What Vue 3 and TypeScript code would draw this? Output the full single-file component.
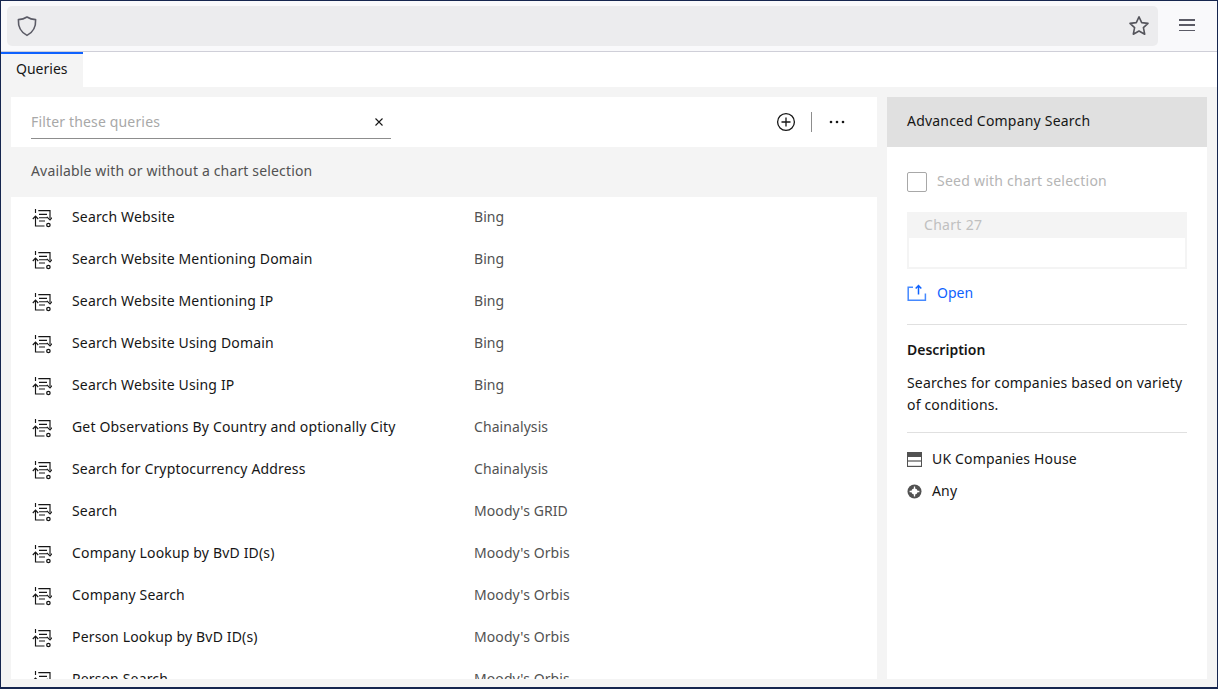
<script setup lang="ts">
interface Row { name: string; source: string }
const rows: Row[] = [
  { name: 'Search Website', source: 'Bing' },
  { name: 'Search Website Mentioning Domain', source: 'Bing' },
  { name: 'Search Website Mentioning IP', source: 'Bing' },
  { name: 'Search Website Using Domain', source: 'Bing' },
  { name: 'Search Website Using IP', source: 'Bing' },
  { name: 'Get Observations By Country and optionally City', source: 'Chainalysis' },
  { name: 'Search for Cryptocurrency Address', source: 'Chainalysis' },
  { name: 'Search', source: "Moody's GRID" },
  { name: 'Company Lookup by BvD ID(s)', source: "Moody's Orbis" },
  { name: 'Company Search', source: "Moody's Orbis" },
  { name: 'Person Lookup by BvD ID(s)', source: "Moody's Orbis" },
  { name: 'Person Search', source: "Moody's Orbis" },
]
</script>

<template>
  <div class="window">
    <div class="top-notch"></div>
    <header class="toolbar">
      <div class="urlbar">
        <svg class="shield" width="22" height="22" viewBox="0 0 22 22" fill="none" stroke="#5b5b66" stroke-width="1.6">
          <path d="M11 2 C13.5 3.6 16 4.4 19.6 4.6 C20 11.5 17.6 17 11 20.4 C4.4 17 2 11.5 2.4 4.6 C6 4.4 8.5 3.6 11 2 Z" stroke-linejoin="round" />
        </svg>
        <svg class="star" width="22" height="22" viewBox="0 0 22 22" fill="none" stroke="#55555c" stroke-width="1.6" stroke-linejoin="round">
          <path d="M11 1.8 L13.7 7.6 L20 8.4 L15.4 12.7 L16.7 19.2 L11 16 L5.3 19.2 L6.6 12.7 L2 8.4 L8.3 7.6 Z" />
        </svg>
      </div>
      <button class="menu" aria-label="Menu"><span></span><span></span><span></span></button>
    </header>

    <nav class="tabs">
      <div class="tab">Queries</div>
    </nav>

    <main class="content">
      <section class="list-panel">
        <div class="filter-bar">
          <div class="filter">
            <span class="placeholder">Filter these queries</span>
            <svg width="10" height="10" viewBox="0 0 10 10" stroke="#161616" stroke-width="1.1"><path d="M1.5 1.5 L8.5 8.5 M8.5 1.5 L1.5 8.5" /></svg>
          </div>
          <div class="actions">
            <svg width="20" height="20" viewBox="0 0 20 20" fill="none" stroke="#161616" stroke-width="1.3">
              <circle cx="10" cy="10" r="8.4" />
              <path d="M10 5.5 V14.5 M5.5 10 H14.5" />
            </svg>
            <span class="divider"></span>
            <svg width="16" height="4" viewBox="0 0 16 4" fill="#161616">
              <circle cx="2" cy="2" r="1.3" /><circle cx="8" cy="2" r="1.3" /><circle cx="14" cy="2" r="1.3" />
            </svg>
          </div>
        </div>
        <div class="group">Available with or without a chart selection</div>
        <div class="rows">
          <div v-for="row in rows" :key="row.name" class="row">
            <svg class="row-icon" width="20" height="20" viewBox="0 0 20 20" fill="none" stroke="#161616" stroke-width="1.15">
              <path d="M3.5 1 V5" />
              <path d="M0.8 11 L3.5 8 L6.2 11 M3.5 8.5 V18 H12.5" />
              <path d="M6.3 2.6 H18 V10.5" />
              <path d="M7 6.3 H15 M7 9.7 H15 M7 13 H13" />
              <path d="M14.8 8.8 L18 12 L19.9 9.6" />
              <circle cx="16.4" cy="17" r="1.7" stroke-width="1.3" />
            </svg>
            <span class="row-name">{{ row.name }}</span>
            <span class="row-source">{{ row.source }}</span>
          </div>
        </div>
      </section>

      <aside class="detail">
        <h2 class="detail-title">Advanced Company Search</h2>
        <div class="detail-body">
          <label class="seed"><span class="box"></span><span class="raised">Seed with chart selection</span></label>
          <div class="chart">
            <div class="chart-head">Chart 27</div>
            <div class="chart-body"></div>
          </div>
          <a class="open">
            <svg width="20" height="18" viewBox="0 0 20 18" fill="none" stroke="#4589ff" stroke-width="1.5">
              <path d="M6 3.2 H1.2 V16.2 H18.4 V9.5" />
              <path d="M11.5 10.5 V2 M8.7 4.5 L11.5 1.5 L14.3 4.5" stroke="#0f62fe" />
            </svg>
            <span class="raised">Open</span>
          </a>
          <div class="section">
            <h3>Description</h3>
            <p>Searches for companies based on variety of conditions.</p>
          </div>
          <div class="meta">
            <div class="meta-row">
              <svg width="15" height="15" viewBox="0 0 15 15">
                <rect width="15" height="15" fill="#525252" />
                <rect x="1" y="5" width="13" height="3.4" fill="#fff" />
                <rect x="1" y="9.6" width="13" height="4.2" fill="#fff" />
              </svg>
              <span class="raised">UK Companies House</span>
            </div>
            <div class="meta-row">
              <svg width="15" height="15" viewBox="0 0 15 15">
                <circle cx="7.5" cy="7.5" r="7" fill="#525252" />
                <circle cx="7.5" cy="7.5" r="3" fill="#fff" />
                <path d="M7.5 2.6 V12.4 M2.6 7.5 H12.4" stroke="#fff" stroke-width="1.3" />
              </svg>
              <span class="raised">Any</span>
            </div>
          </div>
        </div>
      </aside>
    </main>
  </div>
</template>

<style>
html, body { margin: 0; height: 100%; overflow: hidden; }
</style>

<style scoped>
.window {
  position: relative;
  box-sizing: border-box;
  width: 1218px;
  height: 689px;
  display: flex;
  flex-direction: column;
  border: 1px solid #16264f;
  border-bottom-width: 2px;
  background: #f4f4f4;
  font-family: "Noto Sans", "Liberation Sans", sans-serif;
  font-size: 14px;
  letter-spacing: 0.16px;
  color: #161616;
  overflow: hidden;
}
.top-notch {
  position: absolute;
  top: -1px;
  left: 284px;
  width: 6px;
  height: 1px;
  background: #fff;
}
.raised { padding-bottom: 2px; }
.toolbar {
  flex: none;
  box-sizing: border-box;
  height: 51px;
  display: flex;
  align-items: flex-start;
  padding: 5px 0 0 6px;
  background: #f9f9fb;
  border-bottom: 1px solid #cfcfd8;
}
.urlbar {
  width: 1151px;
  height: 40px;
  box-sizing: border-box;
  display: flex;
  align-items: center;
  justify-content: space-between;
  padding: 0 8px 0 9px;
  border-radius: 5px;
  background: #ececee;
}
.menu {
  margin: 13px 0 0 21px;
  width: 16px;
  height: 12px;
  padding: 0;
  border: 0;
  background: none;
  display: flex;
  flex-direction: column;
  justify-content: space-between;
}
.menu span { display: block; height: 1.5px; background: #5b5b66; }
.tabs {
  flex: none;
  height: 35px;
  background: #fff;
  display: flex;
}
.tab {
  width: 82px;
  box-sizing: border-box;
  border-top: 2px solid #0f62fe;
  background: #f4f4f4;
  padding: 5px 0 0 15px;
  line-height: 20px;
  letter-spacing: 0;
  color: #161616;
}
.content {
  flex: 1;
  min-height: 0;
  display: flex;
  gap: 10px;
  padding: 10px 10px 8px;
}
.list-panel {
  width: 866px;
  background: #fff;
  display: flex;
  flex-direction: column;
  overflow: hidden;
}
.filter-bar {
  flex: none;
  height: 50px;
  box-sizing: border-box;
  display: flex;
  align-items: flex-start;
  justify-content: space-between;
  padding: 0 32px 0 20px;
}
.filter {
  width: 360px;
  height: 42px;
  box-sizing: border-box;
  border-bottom: 1px solid #8d8d8d;
  display: flex;
  align-items: center;
  justify-content: space-between;
  padding: 8px 7px 0 0;
}
.placeholder { color: #a8a8a8; }
.actions {
  display: flex;
  align-items: center;
  gap: 15px;
  height: 50px;
}
.divider { width: 1px; height: 20px; background: #8d8d8d; margin-right: 2px; }
.group {
  flex: none;
  height: 50px;
  line-height: 48px;
  padding-left: 20px;
  background: #f4f4f4;
  color: #525252;
}
.rows { flex: 1; min-height: 0; overflow: hidden; }
.row {
  height: 42px;
  display: flex;
  align-items: center;
  padding-left: 21px;
}
.row-icon { flex: none; }
.row-name { width: 402px; margin-left: 20px; flex: none; padding-bottom: 4px; }
.row-source { color: #525252; padding-bottom: 4px; letter-spacing: 0.08px; }
.detail {
  flex: 1;
  background: #fff;
}
.detail-title {
  margin: 0;
  height: 50px;
  line-height: 48px;
  padding-left: 20px;
  background: #e0e0e0;
  font-size: 14px;
  font-weight: 400;
  letter-spacing: 0.2px;
}
.detail-body { padding: 24px 20px 0; }
.seed {
  display: flex;
  align-items: center;
  gap: 10px;
  color: #b5b5b5;
  letter-spacing: 0.24px;
}
.box {
  width: 18px;
  height: 18px;
  border: 1px solid #a8a8a8;
  border-radius: 2px;
}
.chart {
  margin-top: 20px;
  border: 2px solid #f4f4f4;
  border-top: 0;
}
.chart-head {
  height: 26px;
  line-height: 26px;
  padding-left: 15px;
  background: #f4f4f4;
  color: #c0c0c0;
  letter-spacing: 0.3px;
}
.chart-body { height: 29px; background: #fff; }
.open {
  display: flex;
  align-items: center;
  gap: 10px;
  margin-top: 15px;
  color: #0f62fe;
  height: 18px;
  letter-spacing: 0;
}
.section {
  margin-top: 22px;
  padding: 15px 0 16px;
  border-top: 1px solid #e0e0e0;
  border-bottom: 1px solid #e0e0e0;
}
.section h3 { margin: 0; font-size: 14px; font-weight: 600; line-height: 20px; letter-spacing: 0; }
.section p { margin: 12px 0 0; line-height: 22px; }
.meta { padding-top: 16px; }
.meta-row {
  display: flex;
  align-items: center;
  gap: 10px;
  height: 20px;
  margin-bottom: 12px;
}
</style>
